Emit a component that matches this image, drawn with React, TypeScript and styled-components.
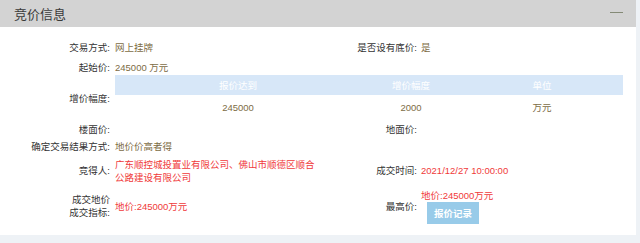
import React from "react";
import styled, { createGlobalStyle } from "styled-components";

const GlobalStyle = createGlobalStyle`
  html, body {
    margin: 0;
    padding: 0;
    background: #eef2f6;
    font-family: "Liberation Sans", "Noto Sans CJK SC", sans-serif;
  }
`;

const COLOR = {
  header: "#d3d3d3",
  label: "#333333",
  value: "#7d6c45",
  red: "#f03a3a",
  tableHead: "#d7e7f8",
  button: "#98cbe9",
};

const Panel = styled.section`
  width: 636px;
  background: #fff;
  padding-bottom: 11px;
  font-size: 9.5px;
`;

const Header = styled.div`
  height: 27px;
  background: ${COLOR.header};
  display: flex;
  align-items: center;
  justify-content: space-between;
  padding: 0 13px 0 14px;
`;

const Title = styled.h3`
  margin: 0;
  font-size: 13px;
  font-weight: normal;
  color: #3a3a3a;
`;

const CollapseBar = styled.span`
  display: block;
  width: 13px;
  height: 1.5px;
  background: #848a76;
  margin-top: -2px;
`;

const Body = styled.div`
  padding-top: 13.5px;
  display: flex;
  flex-direction: column;
`;

const Row = styled.div<{ $gap?: number }>`
  display: grid;
  grid-template-columns: 115px 201px 105px 1fr;
  align-items: center;
  line-height: 13px;
  margin-top: ${(p) => p.$gap ?? 0}px;
`;

const WideRow = styled(Row)`
  grid-template-columns: 115px 1fr;
`;

const Label = styled.div<{ $right?: boolean }>`
  text-align: right;
  padding-right: ${(p) => (p.$right ? 4 : 5)}px;
  color: ${COLOR.label};
`;

const Value = styled.div<{ $red?: boolean }>`
  color: ${(p) => (p.$red ? COLOR.red : COLOR.value)};
`;

const PriceTable = styled.table`
  width: 508px;
  border-collapse: collapse;
  table-layout: fixed;
  margin-top: -2px;
  th {
    height: 20px;
    padding: 0;
    background: ${COLOR.tableHead};
    color: #fff;
    font-weight: normal;
  }
  td {
    height: 24px;
    padding: 0;
    text-align: center;
    color: ${COLOR.value};
  }
`;

const RecordButton = styled.button`
  display: block;
  margin: 0 0 0 6px;
  width: 52px;
  height: 22px;
  border: none;
  background: ${COLOR.button};
  color: #fff;
  font-family: inherit;
  font-size: 9.5px;
  font-weight: bold;
  padding: 0;
`;

const App = (): JSX.Element => {
  const increments = [{ reach: "245000", step: "2000", unit: "万元" }];
  return (
    <>
      <GlobalStyle />
      <Panel>
        <Header>
          <Title>竞价信息</Title>
          <CollapseBar />
        </Header>
        <Body>
          <Row>
            <Label>交易方式:</Label>
            <Value>网上挂牌</Value>
            <Label $right>是否设有底价:</Label>
            <Value>是</Value>
          </Row>
          <Row $gap={7}>
            <Label>起始价:</Label>
            <Value>245000 万元</Value>
          </Row>
          <WideRow $gap={3.5}>
            <Label>增价幅度:</Label>
            <PriceTable>
              <colgroup>
                <col style={{ width: 246 }} />
                <col style={{ width: 100 }} />
                <col style={{ width: 162 }} />
              </colgroup>
              <thead>
                <tr>
                  <th>报价达到</th>
                  <th>增价幅度</th>
                  <th>单位</th>
                </tr>
              </thead>
              <tbody>
                {increments.map((el) => (
                  <tr key={el.reach}>
                    <td>{el.reach}</td>
                    <td>{el.step}</td>
                    <td>{el.unit}</td>
                  </tr>
                ))}
              </tbody>
            </PriceTable>
          </WideRow>
          <Row $gap={3.5}>
            <Label>楼面价:</Label>
            <Value />
            <Label $right>地面价:</Label>
            <Value />
          </Row>
          <Row $gap={4}>
            <Label>确定交易结果方式:</Label>
            <Value>地价价高者得</Value>
          </Row>
          <Row $gap={5}>
            <Label>竞得人:</Label>
            <Value $red>广东顺控城投置业有限公司、佛山市顺德区顺合公路建设有限公司</Value>
            <Label $right>成交时间:</Label>
            <Value $red>2021/12/27 10:00:00</Value>
          </Row>
          <Row $gap={5}>
            <Label>
              成交地价
              <br />
              成交指标:
            </Label>
            <Value $red>地价:245000万元</Value>
            <Label $right>最高价:</Label>
            <div>
              <Value $red>地价:245000万元</Value>
              <RecordButton>报价记录</RecordButton>
            </div>
          </Row>
        </Body>
      </Panel>
    </>
  );
};

export default App;
